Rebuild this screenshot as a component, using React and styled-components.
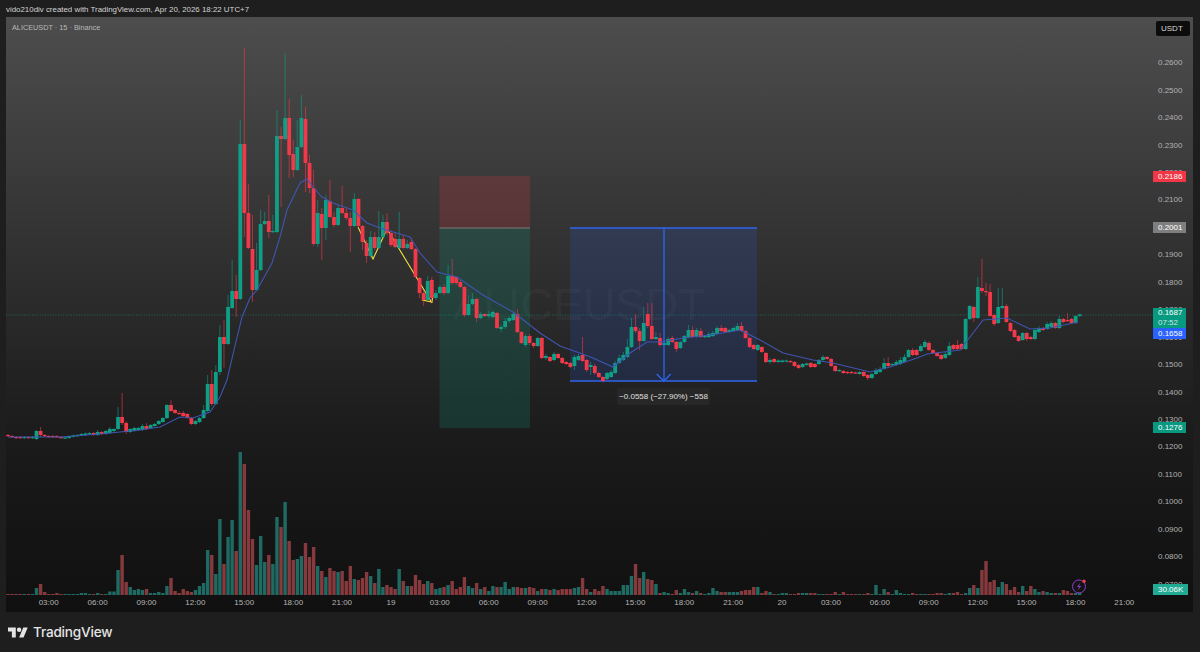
import React from "react";
import styled, { createGlobalStyle } from "styled-components";

const GlobalStyle = createGlobalStyle`
  html, body {
    margin: 0;
    padding: 0;
    background: #1e1e1e;
  }
`;

const UP = "#0e9f86";
const DOWN = "#f2394a";
const UP_VOL = "#1f6b63";
const DOWN_VOL = "#873a3d";

// x of bar number i, one bar is 15 minutes
const barX = (i) => 8 + i * 4.075;

// open, close, high, low in chart pixels (page coordinates)
const candles = [
  [435,436],[436,437],[437,438],[437,438],[438,437],[437,438],[438,437],[439,431,430,440],[431,435,427,437],[435,436],
  [436,436.5],[436,437],[436,437],[437,438],[438,437.5],[438,436.5],[436.5,435.5],[436,435],[435,434],[435,433.5],
  [434,433],[433,435],[435,432,430,436],[432,434],[434,431],[433,429,427,434],[431,429],[429,417,407,430],[417,423,393,425],[423,432,421,434],
  [432,429],[431,428],[430,428],[430,426,424,431],[426,429,423,430],[428,425],[426,424],[424,421],[422,418],[418,405,404,419],
  [405,411,400,412],[410,413],[413,413.5,411],[413,416,411,417],[414,418],[418,424,417,425],[424,421],[422,418],[418,410,405,419],[411,384,375,412],
  [384,404,370,406],[404,372,365,405],[372,337,325,375],[337,344,320,368],[344,307,295,345],[308,291,260,309],[291,299,275,317],[299,144,120,300],[144,213,48,237],[213,248,184,249],
  [249,290,215,302],[290,270,243,291],[270,224,210,271],[224,221,212,225],[221,232,195,238],[232,231,215,233],[232,136,110,233],[136,139,127,207],[139,118,53,140],[118,155,99,178],
  [154,170,140,177],[170,147,120,171],[147,118,95,148],[119,163,107,192],[163,188,155,193],[188,244,170,246],[244,213,200,247],[214,228,208,260],[228,200,195,240],[201,217,180,218],
  [217,225,212,227],[225,208,205,226],[208,213,186,214],[213,218,207,220],[218,226,212,252],[226,199,193,227],[199,226,198,228],[226,242,225,250],[243,256,240,263],[256,237,231,258],
  [237,248,232,250],[248,237,211,249],[237,222,215,238],[222,233,213,235],[233,245,230,247],[239,247,232,248],[248,239,212,249],[239,248,235,249],[248,244,240,249],[242,249,238,250],
  [249,277,248,278],[278,293,277,298],[293,300,290,306],[300,281,276,301],[280,298,277,303],[298,293,290,300],[293,287,285,294],[287,293,284,295],[293,276,265,294],[276,283,259,285],
  [277,283,276,285],[282,287,280,288],[287,315,286,317],[315,304,295,316],[304,299,293,305],[299,318,298,322],[318,314,312,319],[314,316],[316,314,311,318],[317,312,310,318],
  [313,328,312,329],[329,327,325,332],[327,321,318,329],[321,318,316,323],[320,314,312,321],[314,332,309,333],[332,343,331,344],[345,336,334,347],[336,343,334,345],[343,346,342,348],
  [346,338,337,347],[338,358,337,359],[358,356,354,360],[357,361,356,362],[360,354,352,361],[354,358,353,359],[358,363,357,364],[362,364],[363,367,362,368],[366,357,355,370],
  [360,356,354,361],[355,361,337,362],[360,370,359,372],[367,365,362,375],[366,373,364,375],[373,377,372,378],[377,381,376,382],[379,373,372,380],[377,372,370,378],[373,363,361,374],
  [363,358,355,364],[360,355,352,361],[357,347,339,358],[347,327,318,348],[327,331,314,333],[331,341,328,350],[341,323,307,342],[314,326,303,328],[326,339,303,340],[339,337,332,340],
  [338,345,333,347],[345,343,341,346],[345,339,337,346],[338,342,336,343],[342,349,341,352],[348,342,341,349],[342,336,335,343],[337,330,325,338],[330,337,326,338],[337,330,328,338],
  [331,337,328,338],[337,336],[337,334,332,338],[336,333,331,337],[334,328,326,335],[328,331,325,332],[328,332,327,333],[332,330],[331,328,327,332],[330,326,323,331],
  [326,331,322,332],[331,338,330,339],[338,347,337,348],[345,349],[350,345,344,351],[347,352,346,353],[353,362,352,363],[362,360,358,364],[359,362],[362,360.5],
  [362,360.5],[361.5,360.5],[361,361.5],[362,366,361,367],[365,368,364,369],[367,364],[365,363.5],[363,367],[364,367],[364,360],
  [360,357,355,361],[357,359,356,360],[359,366,358,367],[366,371,365,372],[371,370],[371,373],[372,373],[372,372.5],[372.5,373],[374,372],
  [372,376,371,377],[375,378,374,380],[378,374,373,379],[374,370,368,375],[372,369,367,373],[369,363,358,370],[363,366,357,368],[365,364],[365,362,360,366],[364,360,357,365],
  [362,357,354,363],[357,350,349,358],[350,355,348,356],[350,355,349,356],[351,346,344,352],[347,342,340,348],[343,350,341,351],[350,353],[353,356],[355,359,354,360],
  [358,354,352,359],[355,346,342,356],[345,349,344,350],[345,349,340,350],[344,349,343,350],[349,319,318,350],[319,306,305,320],[307,318,306,322],[318,287,277,319],[288,291,259,293],
  [291,291.5,283,296],[292,316,284,317],[315,324,314,326],[323,307,288,324],[308,306,288,309],[306,322,304,323],[323,331,322,332],[330,337,329,338],[336,341,335,342],[340,333,332,341],
  [333,339,332,341],[337,339],[339,330,328,340],[332,328,326,333],[328,330],[329,324,322,330],[327,323,321,328],[323,328,322,329],[328,319,316,329],[319,322,318,323],
  [320,321,313,322],[319,323,318,324],[323,316,315,324],[316,314.5],
];

const volumes = [
  1,1,1,1,1,1,1,7,11,3,1,1,2,1,1,1,1,1,2,2,
  1,1,2,1,1,3.5,3.5,25,40,13,8,5,6,5,6,2,2,3,2,9,
  17,4,2,6,4,3,5,9,12,45,40,21,76,31,58,75,44,143,131,85,
  56,30,59,33,40,31,78,68,93,54,35,36,39,52,38,48,29,24,18,27,
  24,23,24,14,29,16,15,17,23,19,12,26,8,10,8,6,26,14,9,9,
  20,15,11,14,12,6,7,8,10,14,6,8,18,9,7,12,6,8,4,9,
  8,8,13,6,8,8,7,7,8,7,4,6,6,5,6,5,6,6,6,7,
  8,17,6,3,6,4,9,6,4,4,4,10,10,19,31,17,23,16,15,11,
  2,3,2,1,5,2,6,3,2,4,2,1,2,7,4,3,3,3,3,3,
  4,5,5,8,8,2,4,3,1,1,2,2,1,1,2,2,2,2,2,1,
  1,1,1,3,1,3,1,1,1,1,1,2,1,10,1,6,3,1,5,2,
  1,1,2,1,1,1,1,1,2,2,1,2,2,3,1,2,7,10,7,25,
  34,13,15,8,13,11,5,8,3,9,4,9,6,3,4,3,2,2,2,5,
  4,2,2,2,
];

const maLine =
  "8,437 60,437 100,434 120,432 140,430 160,427 180,417 193,418 210,412 220,397 227,380 234,350 242,317 250,298 257,290 272,263 280,237 287,210 300,183 307,179 313,187 322,197 333,203 353,210 367,223 383,229 400,234 410,237 420,253 437,272 457,277 483,295 513,312 540,333 560,346 577,352 593,358 613,367 630,353 647,342 660,342 683,338 710,335 740,330 750,335 760,340 783,353 813,360 833,363 870,372 890,367 917,358 927,354 960,350 970,337 983,320 1007,318 1030,329 1050,328 1078,322";

const priceLabels = [
  "0.2600","0.2500","0.2400","0.2300","0.2200","0.2100","0.2000","0.1900","0.1800","0.1700",
  "0.1600","0.1500","0.1400","0.1300","0.1200","0.1100","0.1000","0.0900","0.0800","0.0700",
];

const timeLabels = [
  "03:00","06:00","09:00","12:00","15:00","18:00","21:00","19","03:00","06:00","09:00","12:00",
  "15:00","18:00","21:00","20","03:00","06:00","09:00","12:00","15:00","18:00","21:00",
];

const Page = styled.div`
  width: 1200px;
  height: 652px;
  display: flex;
  flex-direction: column;
  background: #1e1e1e;
  overflow: hidden;
  font-family: "Liberation Sans", Arial, sans-serif;
`;

const Header = styled.div`
  height: 17px;
  padding: 1px 0 0 6px;
  box-sizing: border-box;
  font-size: 7.9px;
  line-height: 17px;
  color: #d4d4d4;
`;

const ChartPanel = styled.div`
  height: 595px;
  margin: 0 7px 0 6px;
  display: flex;
  flex-direction: column;
  background: linear-gradient(#4d4d4d 0%, #2d2d2d 45%, #1a1a1a 72%, #101010 100%);
`;

const MainRow = styled.div`
  height: 578px;
  display: flex;
`;

const Plot = styled.div`
  position: relative;
  width: 1147px;
  height: 578px;
`;

const ChartSvg = styled.svg`
  position: relative;
  display: block;
`;

const Legend = styled.div`
  position: absolute;
  left: 6px;
  top: 5px;
  font-size: 7.3px;
  line-height: 11px;
  color: #b8b8b8;
`;

const Watermark = styled.div`
  position: absolute;
  left: 447px;
  top: 263px;
  font-size: 45px;
  line-height: 50px;
  color: rgba(255, 255, 255, 0.05);
`;

const MeasureLabel = styled.div`
  position: absolute;
  left: 611px;
  top: 371px;
  width: 93px;
  height: 17px;
  border-radius: 2px;
  background: #272727;
  font-size: 8px;
  line-height: 17px;
  text-align: center;
  color: #e0e0e0;
`;

const PriceAxis = styled.div`
  position: relative;
  flex: 1;
  display: flex;
  flex-direction: column;
  padding-top: 4px;
`;

const UnitButton = styled.div`
  width: 34px;
  height: 15px;
  margin: 0 0 13.3px 3px;
  border-radius: 2px;
  background: #0c0c0c;
  font-size: 8px;
  line-height: 15px;
  text-indent: 5px;
  color: #d8d8d8;
`;

const PriceLabel = styled.div`
  height: 27.45px;
  padding-left: 5px;
  font-size: 8px;
  line-height: 27.45px;
  color: #b2b2b2;
`;

const PriceTag = styled.div`
  position: absolute;
  left: 0;
  top: ${(p) => p.$top}px;
  width: ${(p) => p.$width || 33}px;
  height: ${(p) => p.$height || 11}px;
  padding-left: 5px;
  box-sizing: border-box;
  background: ${(p) => p.$bg};
  font-size: 8px;
  line-height: ${(p) => p.$height || 11}px;
  color: #ffffff;
`;

const TagLine = styled.div`
  height: 10px;
  line-height: 10px;
  color: ${(p) => p.$dim ? "#cfe8e2" : "#ffffff"};
`;

const TimeAxis = styled.div`
  height: 17px;
  display: flex;
  padding-left: 18.25px;
`;

const TimeLabel = styled.div`
  width: 48.9px;
  flex: none;
  font-size: 8px;
  line-height: 16px;
  text-align: center;
  color: #b5b5b5;
`;

const Footer = styled.div`
  flex: 1;
  display: flex;
  align-items: center;
  gap: 5px;
  padding-left: 8px;
`;

const BrandName = styled.div`
  font-family: Inter, "Liberation Sans", sans-serif;
  font-size: 13.6px;
  font-weight: 500;
  letter-spacing: -0.2px;
  color: #e4e4e4;
`;

function Candle({ bar, index }) {
  const [open, close, high, low] = bar;
  const x = barX(index);
  const isUp = close < open;
  const top = Math.min(open, close);
  const bottom = Math.max(open, close);
  const color = isUp ? UP : DOWN;
  return (
    <g fill={color}>
      <rect x={x - 0.5} y={high ?? top - 1} width="1" height={(low ?? bottom + 1) - (high ?? top - 1)} opacity="0.6" />
      <rect x={x - 1.9} y={top} width="3.8" height={Math.max(bottom - top, 1.2)} />
    </g>
  );
}

function VolumeBar({ height, index }) {
  const isUp = candles[index][1] < candles[index][0];
  return (
    <rect x={barX(index) - 1.7} y={595 - height} width="3.4" height={height} fill={isUp ? UP_VOL : DOWN_VOL} />
  );
}

function Chart() {
  return (
    <ChartSvg width="1147" height="578" viewBox="6 17 1147 578">
      {/* short position */}
      <rect x="439.5" y="176" width="90.5" height="52" fill="rgba(242,54,69,0.2)" />
      <rect x="439.5" y="228" width="90.5" height="200" fill="rgba(8,153,129,0.2)" />
      <line x1="439.5" y1="228" x2="530" y2="228" stroke="#7c7c7c" strokeWidth="1.2" />

      {/* price range measure */}
      <rect x="570" y="228" width="187" height="153" fill="rgba(41,98,255,0.15)" />
      <line x1="570" y1="228" x2="757" y2="228" stroke="#2f66ee" strokeWidth="1.3" />
      <line x1="570" y1="381" x2="757" y2="381" stroke="#2f66ee" strokeWidth="1.3" />

      <line x1="6" y1="315" x2="1153" y2="315" stroke="#1f7a68" strokeWidth="0.8" strokeDasharray="1 1.6" />

      {volumes.map((height, i) => (
        <VolumeBar key={i} height={height} index={i} />
      ))}

      <polyline points="358,227 373,259 387,229 432,303" fill="none" stroke="#f4e23e" strokeWidth="1.1" />
      <polyline points="422,300 432,302 433,295" fill="none" stroke="#f4e23e" strokeWidth="1.1" />

      {candles.map((bar, i) => (
        <Candle key={i} bar={bar} index={i} />
      ))}

      <polyline points={maLine} fill="none" stroke="#3f55b0" strokeWidth="1.1" />

      <line x1="664" y1="228" x2="664" y2="381" stroke="#2f66ee" strokeWidth="1.3" />
      <polyline points="656.7,374 663.8,381 670.8,374" fill="none" stroke="#2f66ee" strokeWidth="1.3" />

      {/* bolt badge */}
      <circle cx="1079" cy="586.5" r="6.5" fill="#141414" stroke="#8b3fc8" strokeWidth="1" />
      <path d="M1080.5 582.5 L1077 587 L1079.2 587 L1077.8 590.5 L1081.2 586 L1079 586 Z" fill="#8b3fc8" />
      <circle cx="1084" cy="581.3" r="1.7" fill="#f2394a" />
    </ChartSvg>
  );
}

function App() {
  return (
    <Page>
      <GlobalStyle />
      <Header>vido210div created with TradingView.com, Apr 20, 2026 18:22 UTC+7</Header>
      <ChartPanel>
        <MainRow>
          <Plot>
            <Watermark>ALICEUSDT</Watermark>
            <Chart />
            <Legend>ALICEUSDT · 15 · Binance</Legend>
            <MeasureLabel>−0.0558 (−27.90%) −558</MeasureLabel>
          </Plot>
          <PriceAxis>
            <UnitButton>USDT</UnitButton>
            {priceLabels.map((label) => (
              <PriceLabel key={label}>{label}</PriceLabel>
            ))}
            <PriceTag $top={154} $bg="#f23645">0.2186</PriceTag>
            <PriceTag $top={205} $bg="#7f7f7f">0.2001</PriceTag>
            <PriceTag $top={291} $height={20} $bg="#089981">
              <TagLine>0.1687</TagLine>
              <TagLine $dim>07:52</TagLine>
            </PriceTag>
            <PriceTag $top={311} $bg="#2962ff">0.1658</PriceTag>
            <PriceTag $top={405} $bg="#089981">0.1276</PriceTag>
            <PriceTag $top={567} $width={35} $bg="#22ab94">30.06K</PriceTag>
          </PriceAxis>
        </MainRow>
        <TimeAxis>
          {timeLabels.map((label, i) => (
            <TimeLabel key={i}>{label}</TimeLabel>
          ))}
        </TimeAxis>
      </ChartPanel>
      <Footer>
        <svg width="20" height="11" viewBox="0 4 36 18">
          <path d="M14 22H7V11H0V4h14v18zM28 22h-8l7.5-18h8L28 22z" fill="#e4e4e4" />
          <circle cx="20" cy="8" r="4" fill="#e4e4e4" />
        </svg>
        <BrandName>TradingView</BrandName>
      </Footer>
    </Page>
  );
}

export default App;
